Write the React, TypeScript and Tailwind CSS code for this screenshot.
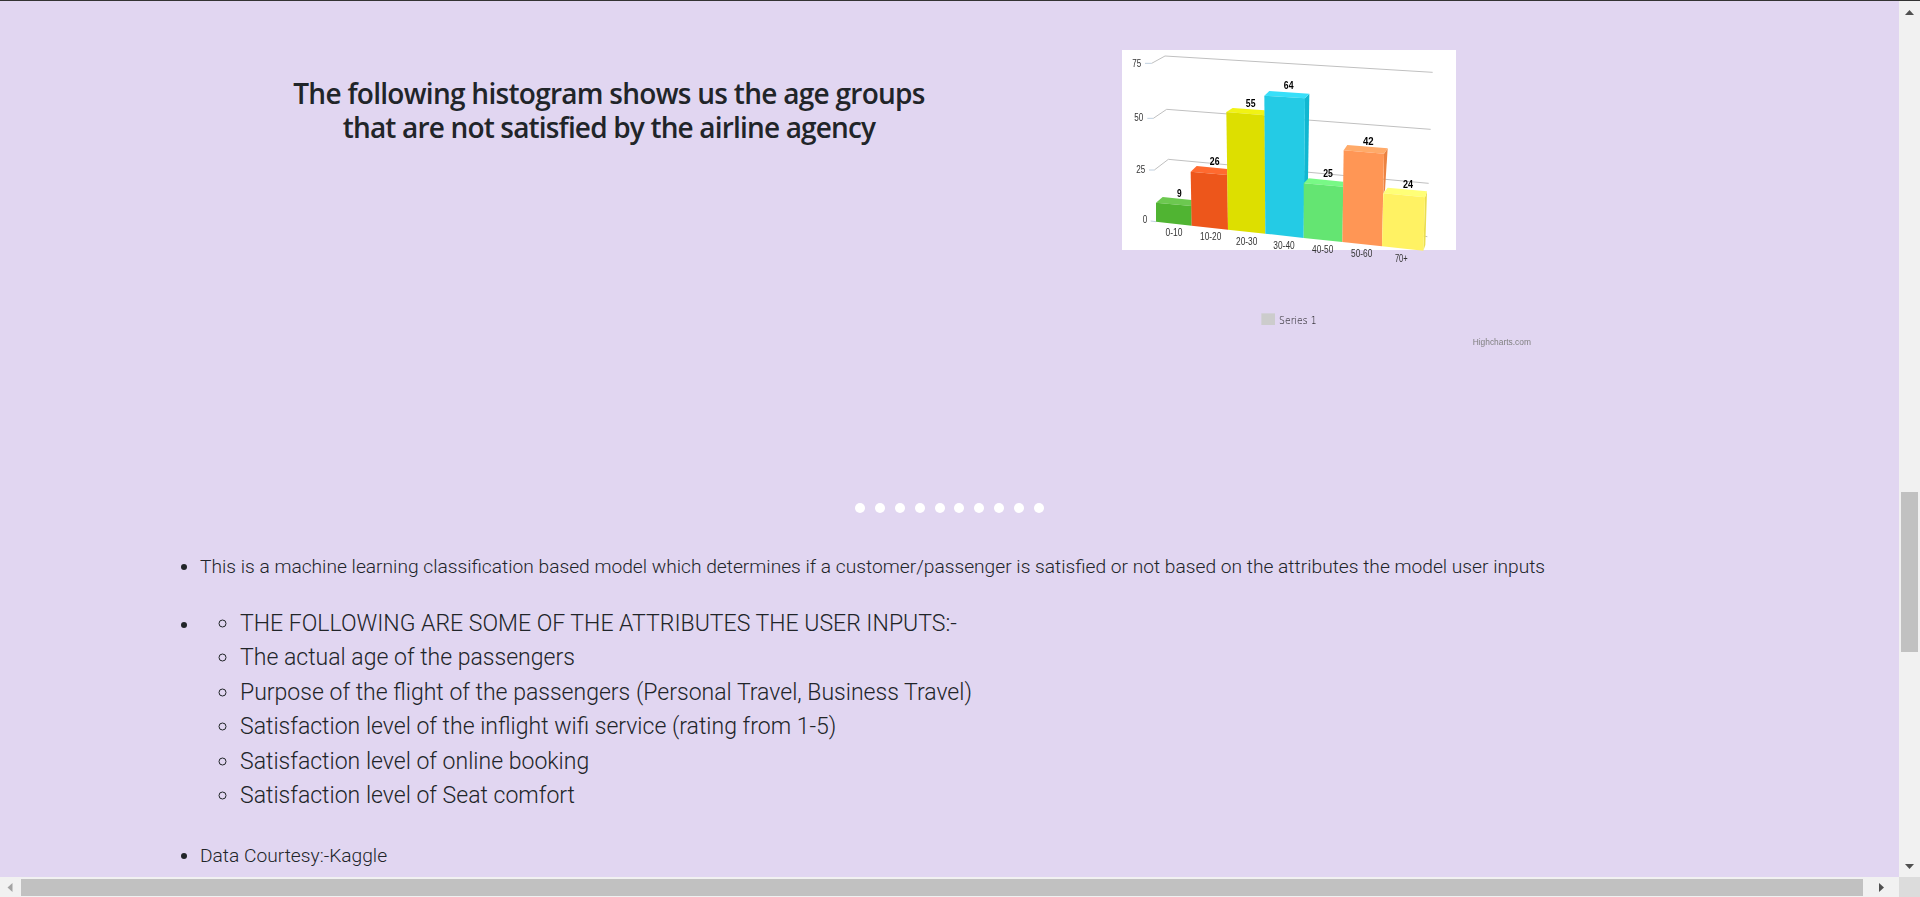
import React from 'react';

type Bar = {
  front: string;
  top: string;
  side?: string;
  color: string;
  topColor: string;
  sideColor?: string;
};

// coordinates are in 3x chart units, the svg viewBox scales them back down
const bars: Bar[] = [
  { front: '168,518 275,528 275,587 168,575', top: '168,518 188,501 275,510 275,528', color: '#50b432', topColor: '#6cc850' },
  { front: '272,425 382,435 384,599 275,587', top: '272,425 290,408 382,417 382,435', color: '#ed561b', topColor: '#ff6a2f' },
  { front: '379,246 494,256 496,611 384,599', top: '379,246 398,234 494,241 494,256', color: '#dddf00', topColor: '#f1f314' },
  { front: '493,197 615,205 611,624 496,611', top: '493,197 508,183 628,191 615,205', side: '615,205 628,191 624,450 612,462', color: '#24cbe5', topColor: '#38dff9', sideColor: '#10b7d1' },
  { front: '611,460 730,470 727,636 611,624', top: '611,460 626,445 730,455 730,470', color: '#64e572', topColor: '#78f986' },
  { front: '731,361 852,371 846,649 727,636', top: '731,361 742,345 863,355 852,371', side: '852,371 863,355 855,480 850,492', color: '#ff9655', topColor: '#ffaa69', sideColor: '#eb8241' },
  { front: '850,490 975,502 970,662 846,649', top: '850,490 863,473 981,484 975,502', side: '975,502 981,484 976,645 970,662', color: '#fff263', topColor: '#ffff77', sideColor: '#ebde4f' },
];

const gridLines = [
  { tick: '135,100 155,100', line: '155,100 195,78 998,127' },
  { tick: '142,265 160,265', line: '160,265 200,238 992,298' },
  { tick: '147,420 163,420', line: '163,420 205,388 986,460' },
];

const valueLabels = [
  { x: 238, y: 500, text: '9', width: 14 },
  { x: 344, y: 406, text: '26', width: 29 },
  { x: 452, y: 230, text: '55', width: 29 },
  { x: 566, y: 178, text: '64', width: 29 },
  { x: 684, y: 442, text: '25', width: 29 },
  { x: 805, y: 344, text: '42', width: 32 },
  { x: 924, y: 473, text: '24', width: 30 },
];

const categoryLabels = [
  { x: 222, y: 619, text: '0-10' },
  { x: 332, y: 631, text: '10-20' },
  { x: 440, y: 644, text: '20-30' },
  { x: 552, y: 656, text: '30-40' },
  { x: 668, y: 670, text: '40-50' },
  { x: 785, y: 682, text: '50-60' },
  { x: 904, y: 695, text: '70+' },
];

const axisLabels = [
  { x: 110, y: 111, text: '75' },
  { x: 116, y: 272, text: '50' },
  { x: 122, y: 428, text: '25' },
  { x: 135, y: 579, text: '0' },
];

const attributes = [
  'THE FOLLOWING ARE SOME OF THE ATTRIBUTES THE USER INPUTS:-',
  'The actual age of the passengers',
  'Purpose of the flight of the passengers (Personal Travel, Business Travel)',
  'Satisfaction level of the inflight wifi service (rating from 1-5)',
  'Satisfaction level of online booking',
  'Satisfaction level of Seat comfort',
];

function Histogram() {
  return (
    <svg
      viewBox="66 60 1260 900"
      className="w-[420px] h-[300px] blur-[0.3px] shrink-0"
      fontFamily="'Liberation Sans', sans-serif"
    >
      <rect x="66" y="60" width="1002" height="600" fill="#ffffff" />
      {gridLines.map((g) => (
        <g key={g.line} fill="none">
          <polyline points={g.tick} stroke="#c0d0e0" strokeWidth="3" />
          <polyline points={g.line} stroke="#c0c0c0" strokeWidth="3" />
        </g>
      ))}
      <polyline points="152,573 168,575" fill="none" stroke="#c0d0e0" strokeWidth="3" />
      <polyline points="970,618 982,620" fill="none" stroke="#c0c0c0" strokeWidth="3" />
      {bars.map((b) => (
        <g key={b.front}>
          {b.side && <polygon points={b.side} fill={b.sideColor} />}
          <polygon points={b.top} fill={b.topColor} />
          <polygon points={b.front} fill={b.color} />
        </g>
      ))}
      <g fontSize="30" fontWeight="700" fill="#000000" textAnchor="middle">
        {valueLabels.map((l) => (
          <text key={l.text} x={l.x} y={l.y} textLength={l.width} lengthAdjust="spacingAndGlyphs">
            {l.text}
          </text>
        ))}
      </g>
      <g fontSize="33" fill="#333333" textAnchor="middle">
        {categoryLabels.map((l) => (
          <text key={l.text} x={l.x} y={l.y} textLength={l.text.length * 12.8} lengthAdjust="spacingAndGlyphs">
            {l.text}
          </text>
        ))}
        {axisLabels.map((l) => (
          <text key={l.text} x={l.x} y={l.y} textLength={l.text.length * 13.5} lengthAdjust="spacingAndGlyphs">
            {l.text}
          </text>
        ))}
      </g>
      <rect x="484" y="850" width="41" height="35" fill="#cccccc" />
      <text x="537" y="881" fontSize="31" fill="#000000" textLength="113" fontFamily="'DejaVu Sans', sans-serif" lengthAdjust="spacingAndGlyphs">
        Series 1
      </text>
      <text x="1118" y="945" fontSize="27" fill="#808080" textLength="175" lengthAdjust="spacingAndGlyphs">
        Highcharts.com
      </text>
    </svg>
  );
}

function Arrow({ points, fill = '#505050' }: { points: string; fill?: string }) {
  return (
    <svg viewBox="0 0 9 9" className="w-[9px] h-[9px]">
      <polygon points={points} fill={fill} />
    </svg>
  );
}

export default function App() {
  return (
    <div className="h-screen w-full flex flex-col overflow-hidden bg-[#f1f1f1]">
      <div className="h-px bg-[#333333] shrink-0" />
      <div className="flex-1 flex min-h-0">
        <main className="flex-1 min-w-0 overflow-hidden bg-[#e1d6f1] text-[#212529] font-['Roboto',sans-serif] font-light">
          <div className="flex pt-[49px]">
            <div className="ml-[150px] w-[918px] shrink-0 pt-[27px]">
              <h3 className="text-center text-[28px] leading-[33.6px] font-semibold font-['Open_Sans',sans-serif] tracking-[-0.72px]">
                The following histogram shows us the age groups
                <br />
                <span className="tracking-[-0.83px]">that are not satisfied by the airline agency</span>
              </h3>
            </div>
            <div className="ml-[54px]">
              <Histogram />
            </div>
          </div>

          <div className="flex justify-center gap-[9.9px] mt-[153px]">
            {Array.from({ length: 10 }).map((_, i) => (
              <span key={i} className="w-[10px] h-[10px] rounded-full bg-white" />
            ))}
          </div>

          <ul className="list-disc pl-[200px] mt-[39px] text-[19.2px] leading-[29px]">
            <li>
              This is a machine learning classification based model which determines if a customer/passenger is
              satisfied or not based on the attributes the model user inputs
            </li>
            <li className="mt-[26px]">
              <ul className="pl-[40px] list-[circle] text-[23.04px] leading-[34.4px]">
                {attributes.map((item) => (
                  <li key={item}>{item}</li>
                ))}
              </ul>
            </li>
            <li className="mt-[28px]">Data Courtesy:-Kaggle</li>
          </ul>
        </main>

        <div className="w-[21px] shrink-0 flex flex-col items-center">
          <div className="h-[20px] flex items-center justify-center shrink-0">
            <Arrow points="4.5,3 9,8 0,8" />
          </div>
          <div className="w-[17px] h-[160px] mt-[471px] bg-[#c1c1c1] shrink-0" />
          <div className="mt-auto h-[20px] flex items-center justify-center shrink-0">
            <Arrow points="0,1 9,1 4.5,6" />
          </div>
        </div>
      </div>

      <div className="h-[20px] shrink-0 flex">
        <div className="flex-1 flex items-center">
          <div className="w-[21px] flex justify-center shrink-0">
            <Arrow points="6.5,0 6.5,9 1.5,4.5" fill="#a3a3a3" />
          </div>
          <div className="w-[1842px] h-[17px] bg-[#c1c1c1] shrink-0 mt-[1px]" />
          <div className="flex-1 flex justify-center">
            <Arrow points="2,0 7,4.5 2,9" />
          </div>
        </div>
        <div className="w-[21px] bg-[#dcdcdc] shrink-0" />
      </div>
    </div>
  );
}
